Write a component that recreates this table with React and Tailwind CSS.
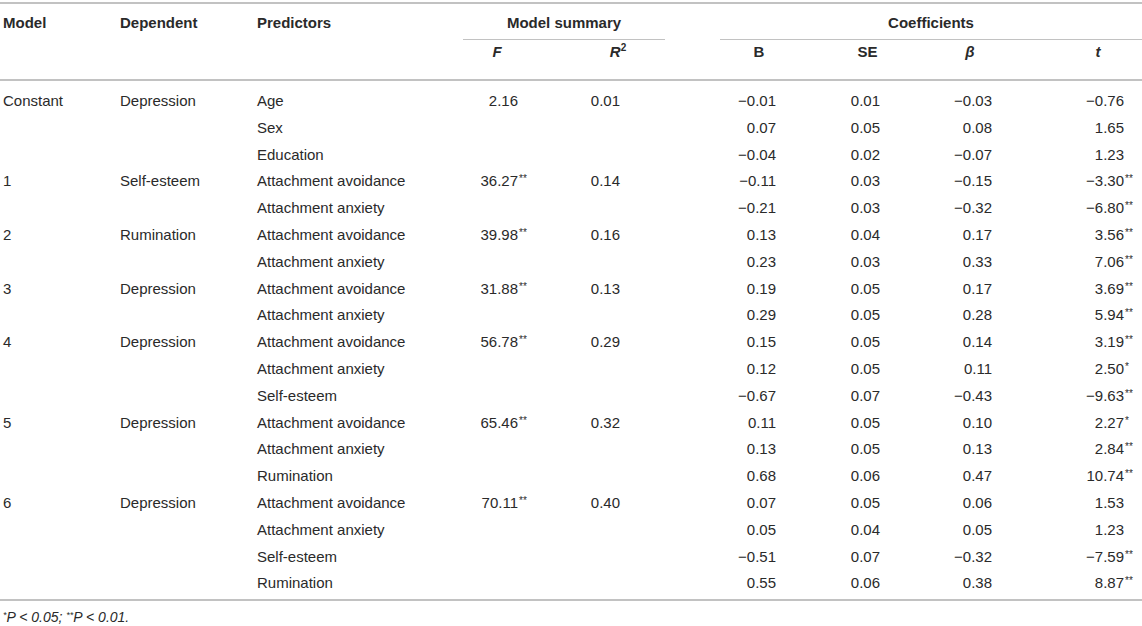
import React from "react";

const cols =
  "grid grid-cols-[120px_137px_206px_102px_100px_55px_95px_105px_110px_112px]";

const rows = [
  ["Constant", "Depression", "Age", "2.16", "0.01", "−0.01", "0.01", "−0.03", "−0.76"],
  ["", "", "Sex", "", "", "0.07", "0.05", "0.08", "1.65"],
  ["", "", "Education", "", "", "−0.04", "0.02", "−0.07", "1.23"],
  ["1", "Self-esteem", "Attachment avoidance", "36.27**", "0.14", "−0.11", "0.03", "−0.15", "−3.30**"],
  ["", "", "Attachment anxiety", "", "", "−0.21", "0.03", "−0.32", "−6.80**"],
  ["2", "Rumination", "Attachment avoidance", "39.98**", "0.16", "0.13", "0.04", "0.17", "3.56**"],
  ["", "", "Attachment anxiety", "", "", "0.23", "0.03", "0.33", "7.06**"],
  ["3", "Depression", "Attachment avoidance", "31.88**", "0.13", "0.19", "0.05", "0.17", "3.69**"],
  ["", "", "Attachment anxiety", "", "", "0.29", "0.05", "0.28", "5.94**"],
  ["4", "Depression", "Attachment avoidance", "56.78**", "0.29", "0.15", "0.05", "0.14", "3.19**"],
  ["", "", "Attachment anxiety", "", "", "0.12", "0.05", "0.11", "2.50*"],
  ["", "", "Self-esteem", "", "", "−0.67", "0.07", "−0.43", "−9.63**"],
  ["5", "Depression", "Attachment avoidance", "65.46**", "0.32", "0.11", "0.05", "0.10", "2.27*"],
  ["", "", "Attachment anxiety", "", "", "0.13", "0.05", "0.13", "2.84**"],
  ["", "", "Rumination", "", "", "0.68", "0.06", "0.47", "10.74**"],
  ["6", "Depression", "Attachment avoidance", "70.11**", "0.40", "0.07", "0.05", "0.06", "1.53"],
  ["", "", "Attachment anxiety", "", "", "0.05", "0.04", "0.05", "1.23"],
  ["", "", "Self-esteem", "", "", "−0.51", "0.07", "−0.32", "−7.59**"],
  ["", "", "Rumination", "", "", "0.55", "0.06", "0.38", "8.87**"],
];

function Num({ value, className }) {
  const m = value.match(/^(.*?)(\**)$/);
  return (
    <div className={"text-right " + className}>
      <span>{m[1]}</span>
      <span className="relative -top-[4px] inline-block w-[13px] pl-[1px] text-left text-[10px]">
        {m[2]}
      </span>
    </div>
  );
}

export default function App() {
  return (
    <div
      className="w-[1142px] h-[626px] bg-white pt-[2px] text-[15px] text-[#2a2a2a]"
      style={{ fontFamily: '"Liberation Sans", Arial, sans-serif' }}
    >
      <div className="border-t-2 border-b-2 border-[#c2c2c2]">
        <div className={cols + " grid-rows-[36px_39px] font-bold leading-[18px]"}>
          <div className="row-span-2 pl-[3px] pt-[10px]">Model</div>
          <div className="row-span-2 pt-[10px]">Dependent</div>
          <div className="row-span-2 pt-[10px]">Predictors</div>
          <div className="col-span-2 border-b border-[#c2c2c2] pt-[10px] text-center">
            Model summary
          </div>
          <div className="col-start-7 col-span-4 border-b border-[#c2c2c2] pt-[10px] text-center">
            Coefficients
          </div>
          <div className="col-start-4 pt-[3px] pr-[34px] text-center italic">F</div>
          <div className="pt-[3px] pl-[6px] text-center">
            <span className="italic">R</span>
            <sup className="text-[10px] -top-[6px]">2</sup>
          </div>
          <div className="col-start-7 pt-[3px] pr-[17px] text-center">B</div>
          <div className="pt-[3px] text-center">SE</div>
          <div className="pt-[3px] pr-[10px] text-center italic">β</div>
          <div className="pt-[3px] pl-[24px] text-center italic">t</div>
        </div>
      </div>

      <div className="border-b-2 border-[#c2c2c2] pt-[7px] pb-[2px]">
        {rows.map((r, i) => (
          <div key={i} className={cols + " h-[26.8px] leading-[26.8px]"}>
            <div className="pl-[3px]">{r[0]}</div>
            <div>{r[1]}</div>
            <div>{r[2]}</div>
            {r[3] ? <Num value={r[3]} className="pr-[34px]" /> : <div />}
            {r[4] ? <Num value={r[4]} className="pr-[32px]" /> : <div />}
            <div />
            <Num value={r[5]} className="pr-[26px]" />
            <Num value={r[6]} className="pr-[27px]" />
            <Num value={r[7]} className="pr-[25px]" />
            <Num value={r[8]} className="pr-[5px]" />
          </div>
        ))}
      </div>

      <p className="mt-[8px] pl-[3px] text-[14px] italic leading-[16px]">
        <sup className="text-[9px]">*</sup>P &lt; 0.05;{" "}
        <sup className="text-[9px]">**</sup>P &lt; 0.01.
      </p>
    </div>
  );
}
